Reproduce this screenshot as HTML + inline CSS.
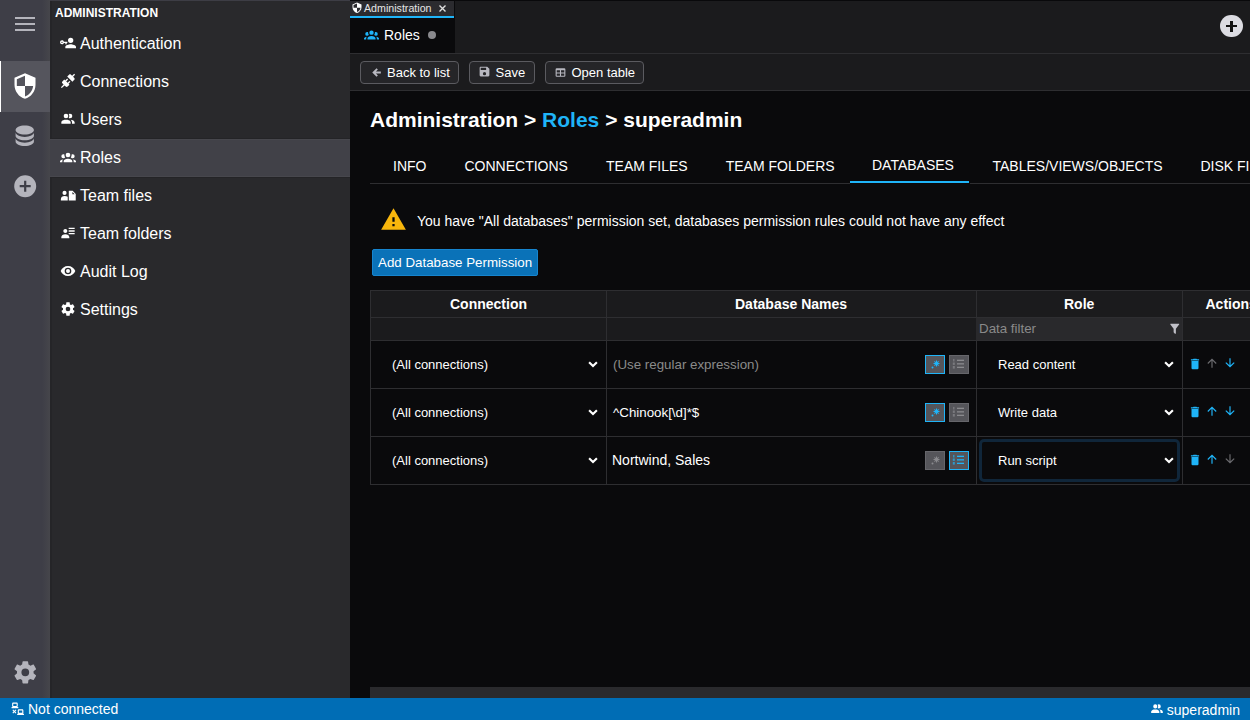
<!DOCTYPE html>
<html><head><meta charset="utf-8">
<style>
*{box-sizing:border-box;margin:0;padding:0}
html,body{width:1250px;height:720px;overflow:hidden;background:#0a0a0c;font-family:"Liberation Sans",sans-serif;color:#fff}
.abs{position:absolute}
svg{display:block}
.t{position:absolute;white-space:pre;line-height:1}
#iconbar{left:0;top:0;width:50px;height:698px;background:#3e3e47}
#sidebar{left:50px;top:0;width:300px;height:698px;background:#29292c}
.mi{position:absolute;left:0;width:300px;height:38px}
.mi svg{position:absolute;left:10px;top:9.5px}
.mi .t{left:30px;top:11px;font-size:16px;color:#fff}
#tabbar{left:350px;top:0;width:900px;height:53px;background:#1b1b1d}
#toolbar{left:350px;top:53px;width:900px;height:38px;background:#1b1b1d;border-top:1px solid #2e2e31;border-bottom:1px solid #2e2e31}
.btn{position:absolute;top:61px;height:23px;border:1px solid #5b5b60;border-radius:4px;background:#252528}
.btn .t{font-size:13px;color:#fff;top:4px}
.btn svg{position:absolute}
#statusbar{left:0;top:698px;width:1250px;height:22px;background:#006db5}
.tab{position:absolute;top:159px;font-size:14px;color:#fff;white-space:pre;line-height:1}
.hd{position:absolute;font-size:14px;font-weight:bold;color:#fff;top:297px;white-space:pre;line-height:1}
.bl{background:#2e2e31}
</style></head><body>

<!-- ICON BAR -->
<div id="iconbar" class="abs">
  <div class="abs" style="left:42px;top:0;width:8px;height:698px;background:linear-gradient(90deg,rgba(70,70,75,0),#46464b)"></div>
  <div class="abs" style="left:15px;top:17px;width:20px;height:2px;background:#b4b4bc"></div>
  <div class="abs" style="left:15px;top:23px;width:20px;height:2px;background:#b4b4bc"></div>
  <div class="abs" style="left:15px;top:29px;width:20px;height:2px;background:#b4b4bc"></div>
  <div class="abs" style="left:0;top:61px;width:50px;height:51px;background:#55555d"></div>
  <div class="abs" style="left:0;top:61px;width:1px;height:51px;background:#fff"></div>
  <svg class="abs" style="left:11.2px;top:72px" width="28" height="28" viewBox="0 0 24 24" preserveAspectRatio="none"><path fill="#fff" d="M12,12H19C18.47,16.11 15.72,19.78 12,20.92V12H5V6.3L12,3.19M12,1L3,5V11C3,16.55 6.84,21.73 12,23C17.16,21.73 21,16.55 21,11V5L12,1Z"/></svg>
  <svg class="abs" style="left:11.2px;top:122.2px" width="27.5" height="27.5" viewBox="0 0 24 24"><path fill="#b4b4bc" d="M12,3C7.58,3 4,4.79 4,7C4,9.21 7.58,11 12,11C16.42,11 20,9.21 20,7C20,4.79 16.42,3 12,3M4,9V12C4,14.21 7.58,16 12,16C16.42,16 20,14.21 20,12V9C20,11.21 16.42,13 12,13C7.58,13 4,11.21 4,9M4,14V17C4,19.21 7.58,21 12,21C16.42,21 20,19.21 20,17V14C20,16.21 16.42,18 12,18C7.58,18 4,16.21 4,14Z"/></svg>
  <svg class="abs" style="left:11.8px;top:172.6px" width="26.4" height="26.4" viewBox="0 0 24 24"><path fill="#b4b4bc" d="M17,13H13V17H11V13H7V11H11V7H13V11H17M12,2A10,10 0 0,0 2,12A10,10 0 0,0 12,22A10,10 0 0,0 22,12A10,10 0 0,0 12,2Z"/></svg>
  <svg class="abs" style="left:11.5px;top:658.5px" width="26.6" height="26.6" viewBox="0 0 24 24"><path fill="#b4b4bc" d="M12,15.5A3.5,3.5 0 0,1 8.5,12A3.5,3.5 0 0,1 12,8.5A3.5,3.5 0 0,1 15.5,12A3.5,3.5 0 0,1 12,15.5M19.43,12.97C19.47,12.65 19.5,12.33 19.5,12C19.5,11.67 19.47,11.34 19.43,11L21.54,9.37C21.73,9.22 21.78,8.95 21.66,8.73L19.66,5.27C19.54,5.05 19.27,4.96 19.05,5.05L16.56,6.05C16.04,5.66 15.5,5.32 14.87,5.07L14.5,2.42C14.46,2.18 14.25,2 14,2H10C9.75,2 9.54,2.18 9.5,2.42L9.13,5.07C8.5,5.32 7.960,5.66 7.44,6.05L4.95,5.05C4.73,4.96 4.46,5.05 4.34,5.27L2.34,8.73C2.21,8.95 2.27,9.22 2.46,9.37L4.57,11C4.53,11.34 4.5,11.67 4.5,12C4.5,12.33 4.53,12.65 4.57,12.97L2.46,14.63C2.27,14.78 2.21,15.05 2.34,15.27L4.34,18.73C4.46,18.95 4.73,19.03 4.95,18.95L7.44,17.94C7.96,18.34 8.5,18.68 9.13,18.93L9.5,21.58C9.54,21.82 9.75,22 10,22H14C14.25,22 14.46,21.82 14.5,21.58L14.87,18.93C15.5,18.67 16.04,18.34 16.56,17.94L19.05,18.95C19.27,19.03 19.54,18.950 19.66,18.73L21.66,15.27C21.78,15.05 21.730,14.78 21.54,14.63L19.43,12.97Z"/></svg>
</div>

<!-- SIDEBAR -->
<div id="sidebar" class="abs">
  <div class="abs" style="left:0;top:1px;width:2px;height:697px;background:#252528"></div>
  <div class="abs" style="left:0;top:0;width:300px;height:1px;background:#3d3d45"></div>
  <div class="t" style="left:5px;top:7px;font-size:12px;font-weight:bold">ADMINISTRATION</div>
  <!-- items -->
  <div class="mi" style="top:25px">
    <svg width="16" height="16" viewBox="0 0 24 24"><path fill="#fff" d="M11,10V12H10V14H8V12H5.83C5.42,13.17 4.31,14 3,14A3,3 0 0,1 0,11A3,3 0 0,1 3,8C4.31,8 5.42,8.83 5.830,10H11M3,10A1,1 0 0,0 2,11A1,1 0 0,0 3,12A1,1 0 0,0 4,11A1,1 0 0,0 3,10M16,14C18.67,14 24,15.34 24,18V20H8V18C8,15.34 13.33,14 16,14M16,12A4,4 0 0,1 12,8A4,4 0 0,1 16,4A4,4 0 0,1 20,8A4,4 0 0,1 16,12Z"/></svg>
    <div class="t">Authentication</div>
  </div>
  <div class="mi" style="top:63px">
    <svg width="16" height="16" viewBox="0 0 24 24"><path fill="#fff" d="M21.4 7.5C22.2 8.3 22.2 9.6 21.4 10.3L18.6 13.1L10.8 5.3L13.6 2.5C14.4 1.7 15.7 1.7 16.4 2.5L18.2 4.3L21.2 1.3L22.6 2.7L19.6 5.700L21.4 7.5M15.6 13.3L14.2 11.9L11.4 14.7L9.3 12.6L12.1 9.8L10.7 8.4L7.9 11.2L6.4 9.8L3.6 12.6C2.8 13.4 2.8 14.7 3.6 15.4L5.4 17.2L1.4 21.2L2.8 22.6L6.8 18.6L8.6 20.4C9.4 21.2 10.7 21.2 11.4 20.4L14.2 17.6L12.8 16.2L15.6 13.3Z"/></svg>
    <div class="t">Connections</div>
  </div>
  <div class="mi" style="top:101px">
    <svg width="16" height="16" viewBox="0 0 24 24"><path fill="#fff" d="M16 17V19H2V17S2 13 9 13 16 17 16 17M12.5 7.5A3.5 3.5 0 1 0 9 11A3.5 3.5 0 0 0 12.5 7.5M15.94 13A5.32 5.32 0 0 1 18 17V19H22V17S22 13.37 15.94 13M15 4A3.39 3.39 0 0 0 13.07 4.59A5 5 0 0 1 13.07 10.41A3.39 3.39 0 0 0 15 11A3.5 3.5 0 0 0 15 4Z"/></svg>
    <div class="t">Users</div>
  </div>
  <div class="abs" style="left:0;top:138px;width:300px;height:1px;background:#242427"></div><div class="abs" style="left:0;top:177px;width:300px;height:1px;background:#242427"></div>
  <div class="mi" style="top:139px;background:#414148;box-shadow:inset 0 1px 0 #47474d,inset 0 -1px 0 #47474d">
    <svg width="16" height="16" viewBox="0 0 24 24"><path fill="#fff" d="M12,5.5A3.5,3.5 0 0,1 15.5,9A3.5,3.5 0 0,1 12,12.5A3.5,3.5 0 0,1 8.5,9A3.5,3.5 0 0,1 12,5.5M5,8C5.56,8 6.08,8.15 6.53,8.42C6.38,9.85 6.8,11.27 7.66,12.38C7.16,13.34 6.16,14 5,14A3,3 0 0,1 2,11A3,3 0 0,1 5,8M19,8A3,3 0 0,1 22,11A3,3 0 0,1 19,14C17.84,14 16.84,13.34 16.34,12.38C17.2,11.27 17.62,9.85 17.47,8.42C17.92,8.15 18.44,8 19,8M5.5,18.25C5.5,16.18 8.41,14.5 12,14.5C15.59,14.5 18.5,16.18 18.5,18.25V20H5.5V18.25M0,20V18.5C0,17.11 1.89,15.94 4.45,15.6C3.86,16.28 3.5,17.22 3.5,18.25V20H0M24,20H20.5V18.25C20.5,17.22 20.14,16.28 19.55,15.6C22.11,15.94 24,17.11 24,18.5V20Z"/></svg>
    <div class="t">Roles</div>
  </div>
  <div class="mi" style="top:177px">
    <svg width="16" height="16" viewBox="0 0 24 24"><path fill="#fff" d="M6.8,5.8A3.1,3.1 0 0,1 9.9,8.9A3.1,3.1 0 0,1 6.8,12A3.1,3.1 0 0,1 3.7,8.9A3.1,3.1 0 0,1 6.8,5.8M1.3,20.3V18C1.3,15.6 3.8,13.6 6.8,13.6C8.6,13.6 10.3,14 11.6,14.8V20.3H1.3M13.2,5.8H19L23.6,10.4V20.3H13.2V5.8M18.6,7.4V10.8H22Z"/></svg>
    <div class="t">Team files</div>
  </div>
  <div class="mi" style="top:215px">
    <svg width="16" height="16" viewBox="0 0 24 24"><path fill="#fff" d="M11 9C11 10.66 9.66 12 8 12C6.34 12 5 10.66 5 9C5 7.34 6.34 6 8 6C9.66 6 11 7.34 11 9M14 20H2V18C2 15.79 4.69 14 8 14C11.31 14 14 15.79 14 18M22 12V14H13V12M22 8V10H13V8M22 4V6H13V4Z"/></svg>
    <div class="t">Team folders</div>
  </div>
  <div class="mi" style="top:253px">
    <svg width="16" height="16" viewBox="0 0 24 24"><path fill="#fff" d="M12,9A3,3 0 0,0 9,12A3,3 0 0,0 12,15A3,3 0 0,0 15,12A3,3 0 0,0 12,9M12,17A5,5 0 0,1 7,12A5,5 0 0,1 12,7A5,5 0 0,1 17,12A5,5 0 0,1 12,17M12,4.5C7,4.5 2.73,7.61 1,12C2.73,16.39 7,19.5 12,19.5C17,19.5 21.27,16.39 23,12C21.27,7.61 17,4.5 12,4.5Z"/></svg>
    <div class="t">Audit Log</div>
  </div>
  <div class="mi" style="top:291px">
    <svg width="16" height="16" viewBox="0 0 24 24"><path fill="#fff" d="M12,15.5A3.5,3.5 0 0,1 8.5,12A3.5,3.5 0 0,1 12,8.5A3.5,3.5 0 0,1 15.5,12A3.5,3.5 0 0,1 12,15.5M19.43,12.97C19.47,12.65 19.5,12.33 19.5,12C19.5,11.67 19.47,11.34 19.43,11L21.54,9.37C21.73,9.22 21.78,8.95 21.66,8.73L19.66,5.27C19.54,5.05 19.27,4.96 19.05,5.05L16.56,6.05C16.04,5.66 15.5,5.32 14.87,5.07L14.5,2.42C14.46,2.18 14.25,2 14,2H10C9.75,2 9.54,2.18 9.5,2.42L9.13,5.07C8.5,5.32 7.96,5.66 7.44,6.05L4.95,5.05C4.73,4.96 4.46,5.05 4.34,5.27L2.34,8.73C2.21,8.95 2.27,9.22 2.46,9.37L4.57,11C4.53,11.34 4.5,11.67 4.5,12C4.5,12.33 4.53,12.65 4.57,12.97L2.46,14.63C2.27,14.78 2.21,15.05 2.34,15.27L4.34,18.73C4.46,18.95 4.73,19.03 4.95,18.95L7.44,17.94C7.96,18.34 8.5,18.68 9.13,18.93L9.5,21.58C9.54,21.82 9.75,22 10,22H14C14.25,22 14.46,21.82 14.5,21.58L14.87,18.93C15.5,18.67 16.04,18.34 16.56,17.94L19.05,18.95C19.27,19.03 19.54,18.95 19.66,18.73L21.66,15.27C21.78,15.05 21.73,14.78 21.54,14.63L19.43,12.97Z"/></svg>
    <div class="t">Settings</div>
  </div>
</div>


<!-- TAB BAR -->
<div id="tabbar" class="abs">
  <div class="abs" style="left:0;top:0;width:900px;height:1px;background:#09090b"></div><div class="abs" style="left:0;top:1px;width:104px;height:15px;background:#2b2b2f"></div><div class="abs" style="left:104px;top:0;width:1px;height:53px;background:#0a0a0c"></div>
  <div class="abs" style="left:0;top:16px;width:104px;height:2px;background:#1fb4f8"></div>
  <div class="abs" style="left:0;top:18px;width:105px;height:35px;background:#0a0a0c"></div>
  <svg class="abs" style="left:0.5px;top:1.9px" width="12" height="11.5" viewBox="0 0 24 24" preserveAspectRatio="none"><path fill="#fff" d="M12,12H19C18.47,16.11 15.72,19.78 12,20.92V12H5V6.3L12,3.19M12,1L3,5V11C3,16.55 6.84,21.73 12,23C17.16,21.730 21,16.55 21,11V5L12,1Z"/></svg>
  <div class="t" style="left:14px;top:3px;font-size:10.67px;color:#e6e6e6">Administration</div>
  <svg class="abs" style="left:89px;top:5px" width="7" height="7" viewBox="0 0 7 7"><path fill="none" stroke="#e0e0e0" stroke-width="1.4" d="M0.5,0.5L6.5,6.5M6.5,0.5L0.5,6.5"/></svg>
  <svg class="abs" style="left:14px;top:27px" width="15" height="15" viewBox="0 0 24 24"><path fill="#1fb4f8" d="M12,5.5A3.5,3.5 0 0,1 15.5,9A3.5,3.5 0 0,1 12,12.5A3.5,3.5 0 0,1 8.5,9A3.5,3.5 0 0,1 12,5.5M5,8C5.56,8 6.08,8.15 6.53,8.42C6.38,9.85 6.8,11.27 7.66,12.38C7.16,13.34 6.16,14 5,14A3,3 0 0,1 2,11A3,3 0 0,1 5,8M19,8A3,3 0 0,1 22,11A3,3 0 0,1 19,14C17.84,14 16.84,13.34 16.34,12.38C17.2,11.27 17.62,9.85 17.47,8.42C17.92,8.15 18.44,8 19,8M5.5,18.25C5.5,16.18 8.41,14.5 12,14.5C15.59,14.5 18.5,16.18 18.5,18.25V20H5.5V18.25M0,20V18.5C0,17.11 1.89,15.94 4.45,15.6C3.86,16.28 3.5,17.22 3.5,18.25V20H0M24,20H20.5V18.25C20.5,17.22 20.14,16.28 19.55,15.6C22.11,15.940 24,17.11 24,18.5V20Z"/></svg>
  <div class="t" style="left:34px;top:28px;font-size:14px;color:#fff">Roles</div>
  <div class="abs" style="left:78px;top:31px;width:8px;height:8px;border-radius:50%;background:#8a8a8e"></div>
  <div class="abs" style="left:870px;top:14.8px;width:22.6px;height:22.6px;border-radius:50%;background:#dcdce2"></div>
  <div class="abs" style="left:876px;top:25px;width:11.2px;height:2.1px;background:#111"></div>
  <div class="abs" style="left:880.3px;top:20.5px;width:2.3px;height:11px;background:#111"></div>
</div>

<!-- TOOLBAR -->
<div id="toolbar" class="abs"></div>
<div class="btn" style="left:360px;width:99px">
  <svg style="left:8.5px;top:3.6px" width="13" height="13" viewBox="0 0 24 24"><path fill="#b8b8c0" d="M20,10V14H11L14.5,17.5L12.08,19.92L4.16,12L12.08,4.08L14.5,6.5L11,10H20Z"/></svg>
  <div class="t" style="left:26px">Back to list</div>
</div>
<div class="btn" style="left:469px;width:66px">
  <svg style="left:8px;top:3.4px" width="13" height="13" viewBox="0 0 24 24"><path fill="#b8b8c0" d="M15,9H5V5H15M12,19A3,3 0 0,1 9,16A3,3 0 0,1 12,13A3,3 0 0,1 15,16A3,3 0 0,1 12,19M17,3H5C3.89,3 3,3.9 3,5V19A2,2 0 0,0 5,21H19A2,2 0 0,0 21,19V7L17,3Z"/></svg>
  <div class="t" style="left:25.5px">Save</div>
</div>
<div class="btn" style="left:545px;width:99px">
  <svg style="left:7.5px;top:3.5px" width="13" height="13" viewBox="0 0 24 24"><path fill="#b8b8c0" d="M5,4H19A2,2 0 0,1 21,6V18A2,2 0 0,1 19,20H5A2,2 0 0,1 3,18V6A2,2 0 0,1 5,4M5,8V12H11V8H5M13,8V12H19V8H13M5,14V18H11V14H5M13,14V18H19V14H13Z"/></svg>
  <div class="t" style="left:25.5px">Open table</div>
</div>

<!-- TITLE -->
<div class="t" style="left:370px;top:109px;font-size:21px;font-weight:bold;color:#fff">Administration &gt; <span style="color:#1fb4f8">Roles</span> &gt; superadmin</div>

<!-- TABS -->
<div class="abs bl" style="left:370px;top:183px;width:880px;height:1px"></div>
<div class="tab" style="left:393px">INFO</div>
<div class="tab" style="left:464.5px">CONNECTIONS</div>
<div class="tab" style="left:606px">TEAM FILES</div>
<div class="tab" style="left:725.7px">TEAM FOLDERS</div>
<div class="tab" style="left:872px;top:158px">DATABASES</div>
<div class="abs" style="left:850px;top:181px;width:119px;height:2px;background:#1fb4f8"></div><div class="abs" style="left:850px;top:183px;width:120px;height:1px;background:#09090b"></div>
<div class="tab" style="left:992.5px">TABLES/VIEWS/OBJECTS</div>
<div class="tab" style="left:1200.5px">DISK FILES</div>

<!-- WARNING -->
<svg class="abs" style="left:379.5px;top:206px" width="27" height="27" viewBox="0 0 24 24"><path fill="#f8b60c" d="M13,14H11V10H13M13,18H11V16H13M1,21H23L12,2L1,21Z"/></svg>
<div class="t" style="left:417px;top:214px;font-size:14px;color:#fff">You have "All databases" permission set, databases permission rules could not have any effect</div>

<!-- ADD BUTTON -->
<div class="abs" style="left:372px;top:249px;width:166px;height:27px;background:#0a72b8;border-radius:2px;border:1px solid #1685cf"></div>
<div class="t" style="left:378px;top:256px;font-size:13.33px;color:#fff">Add Database Permission</div>

<!-- TABLE -->
<div class="abs" style="left:370px;top:290px;width:880px;height:51px;background:#1b1b1d"></div>
<div class="abs bl" style="left:370px;top:290px;width:880px;height:1px"></div>
<div class="abs bl" style="left:370px;top:317px;width:880px;height:1px"></div>
<div class="abs bl" style="left:370px;top:340px;width:880px;height:1px"></div>
<div class="abs bl" style="left:370px;top:388px;width:880px;height:1px"></div>
<div class="abs bl" style="left:370px;top:436px;width:880px;height:1px"></div>
<div class="abs bl" style="left:370px;top:484px;width:880px;height:1px"></div>
<div class="abs bl" style="left:370px;top:290px;width:1px;height:195px"></div>
<div class="abs bl" style="left:606px;top:290px;width:1px;height:195px"></div>
<div class="abs bl" style="left:976px;top:290px;width:1px;height:195px"></div>
<div class="abs bl" style="left:1182px;top:290px;width:1px;height:195px"></div>
<div class="hd" style="left:450px">Connection</div>
<div class="hd" style="left:735px">Database Names</div>
<div class="hd" style="left:1064px">Role</div>
<div class="hd" style="left:1205.5px">Actions</div>
<div class="abs" style="left:976px;top:318px;width:206px;height:22px;background:#29292c"></div>
<div class="t" style="left:979px;top:322px;font-size:13.33px;color:#8a8a8a">Data filter</div>
<svg class="abs" style="left:1167.5px;top:321.5px" width="13.5" height="13.5" viewBox="0 0 24 24"><path fill="#c0c0c8" d="M14,12V19.88C14.04,20.18 13.94,20.5 13.71,20.71C13.32,21.1 12.69,21.1 12.3,20.71L10.29,18.7C10.06,18.47 9.96,18.16 10,17.87V12H9.97L4.21,4.62C3.87,4.19 3.95,3.56 4.38,3.22C4.57,3.08 4.78,3 5,3H19C19.22,3 19.43,3.08 19.62,3.22C20.05,3.56 20.13,4.19 19.79,4.62L14.03,12H14Z"/></svg>
<div class="t" style="left:392px;top:358px;font-size:13px;color:#fff">(All connections)</div>
<svg class="abs" style="left:588px;top:360.5px" width="10" height="7" viewBox="0 0 10 7"><path fill="none" stroke="#fff" stroke-width="2.1" d="M1.1,1.2L5,5.1L8.9,1.2"/></svg>
<div class="t" style="left:613px;top:357.5px;font-size:13.33px;color:#8a8a8a">(Use regular expression)</div>
<div class="abs" style="left:925px;top:355px;width:20px;height:19px;background:#55555a;border:1px solid #1fb4f8;"></div><svg class="abs" style="left:929px;top:358px" width="12" height="12" viewBox="0 0 24 24"><path fill="#1fb4f8" d="M16,16.92C15.67,16.97 15.34,17 15,17C14.66,17 14.33,16.97 14,16.92V13.41L11.5,15.89C11,15.5 10.5,15 10.11,14.5L12.59,12H9.08C9.03,11.67 9,11.34 9,11C9,10.66 9.03,10.33 9.08,10H12.59L10.11,7.5C10.3,7.25 10.5,7 10.76,6.76V6.76C11,6.5 11.25,6.3 11.5,6.11L14,8.59V5.08C14.33,5.03 14.66,5 15,5C15.34,5 15.67,5.03 16,5.08V8.59L18.5,6.11C19,6.5 19.5,7 19.89,7.5L17.41,10H20.92C20.97,10.33 21,10.66 21,11C21,11.34 20.97,11.67 20.92,12H17.41L19.89,14.5C19.7,14.75 19.5,15 19.24,15.24V15.24C19,15.5 18.75,15.7 18.5,15.89L16,13.41V16.92H16V16.92M5,19A2,2 0 0,1 7,17A2,2 0 0,1 9,19A2,2 0 0,1 7,21A2,2 0 0,1 5,19H5Z"/></svg>
<div class="abs" style="left:949px;top:355px;width:20px;height:19px;background:#55555a;border:1px solid #66666b;"></div><svg class="abs" style="left:952px;top:358.2px" width="13" height="12" viewBox="0 0 13 12"><g fill="#8a8a8e"><rect x="5" y="1.7" width="7" height="1.3"/><rect x="5" y="5.2" width="7" height="1.3"/><rect x="5" y="8.7" width="7" height="1.3"/><rect x="1.2" y="0.9" width="1.2" height="2.6" opacity=".8"/><rect x="0.8" y="4.5" width="2" height="2.4" opacity=".7"/><rect x="0.8" y="8" width="2" height="2.6" opacity=".7"/></g></svg>
<div class="t" style="left:998px;top:358px;font-size:13px;color:#fff">Read content</div>
<svg class="abs" style="left:1164px;top:360.5px" width="10" height="7" viewBox="0 0 10 7"><path fill="none" stroke="#fff" stroke-width="2.1" d="M1.1,1.2L5,5.1L8.9,1.2"/></svg>
<svg class="abs" style="left:1188.3px;top:356.5px" width="14" height="14" viewBox="0 0 24 24"><path fill="#1fb4f8" d="M19,4H15.5L14.5,3H9.5L8.5,4H5V6H19M6,19A2,2 0 0,0 8,21H16A2,2 0 0,0 18,19V7H6V19Z"/></svg>
<svg class="abs" style="left:1205.3px;top:355.5px" width="14" height="14" viewBox="0 0 24 24"><path fill="#6a6a6e" d="M13,20H11V8L5.5,13.5L4.08,12.08L12,4.16L19.92,12.08L18.5,13.5L13,8V20Z"/></svg>
<svg class="abs" style="left:1223.3px;top:355.5px" width="14" height="14" viewBox="0 0 24 24"><path fill="#1fb4f8" d="M11,4H13V16L18.5,10.5L19.920,11.92L12,19.84L4.08,11.92L5.5,10.5L11,16V4Z"/></svg>
<div class="t" style="left:392px;top:406px;font-size:13px;color:#fff">(All connections)</div>
<svg class="abs" style="left:588px;top:408.5px" width="10" height="7" viewBox="0 0 10 7"><path fill="none" stroke="#fff" stroke-width="2.1" d="M1.1,1.2L5,5.1L8.9,1.2"/></svg>
<div class="t" style="left:613px;top:405.5px;font-size:13.33px;color:#fff">^Chinook[\d]*$</div>
<div class="abs" style="left:925px;top:403px;width:20px;height:19px;background:#55555a;border:1px solid #1fb4f8;"></div><svg class="abs" style="left:929px;top:406px" width="12" height="12" viewBox="0 0 24 24"><path fill="#1fb4f8" d="M16,16.92C15.67,16.97 15.34,17 15,17C14.66,17 14.33,16.97 14,16.92V13.41L11.5,15.89C11,15.5 10.5,15 10.11,14.5L12.59,12H9.08C9.03,11.67 9,11.34 9,11C9,10.66 9.03,10.33 9.08,10H12.59L10.11,7.5C10.3,7.25 10.5,7 10.76,6.76V6.76C11,6.5 11.25,6.3 11.5,6.11L14,8.59V5.08C14.33,5.03 14.66,5 15,5C15.34,5 15.67,5.03 16,5.08V8.59L18.5,6.11C19,6.5 19.5,7 19.89,7.5L17.41,10H20.92C20.97,10.33 21,10.66 21,11C21,11.34 20.97,11.67 20.92,12H17.41L19.89,14.5C19.7,14.75 19.5,15 19.24,15.24V15.24C19,15.5 18.75,15.7 18.5,15.89L16,13.41V16.92H16V16.92M5,19A2,2 0 0,1 7,17A2,2 0 0,1 9,19A2,2 0 0,1 7,21A2,2 0 0,1 5,19H5Z"/></svg>
<div class="abs" style="left:949px;top:403px;width:20px;height:19px;background:#55555a;border:1px solid #66666b;"></div><svg class="abs" style="left:952px;top:406.2px" width="13" height="12" viewBox="0 0 13 12"><g fill="#8a8a8e"><rect x="5" y="1.7" width="7" height="1.3"/><rect x="5" y="5.2" width="7" height="1.3"/><rect x="5" y="8.7" width="7" height="1.3"/><rect x="1.2" y="0.9" width="1.2" height="2.6" opacity=".8"/><rect x="0.8" y="4.5" width="2" height="2.4" opacity=".7"/><rect x="0.8" y="8" width="2" height="2.6" opacity=".7"/></g></svg>
<div class="t" style="left:998px;top:406px;font-size:13px;color:#fff">Write data</div>
<svg class="abs" style="left:1164px;top:408.5px" width="10" height="7" viewBox="0 0 10 7"><path fill="none" stroke="#fff" stroke-width="2.1" d="M1.1,1.2L5,5.1L8.9,1.2"/></svg>
<svg class="abs" style="left:1188.3px;top:404.5px" width="14" height="14" viewBox="0 0 24 24"><path fill="#1fb4f8" d="M19,4H15.5L14.5,3H9.5L8.5,4H5V6H19M6,19A2,2 0 0,0 8,21H16A2,2 0 0,0 18,19V7H6V19Z"/></svg>
<svg class="abs" style="left:1205.3px;top:403.5px" width="14" height="14" viewBox="0 0 24 24"><path fill="#1fb4f8" d="M13,20H11V8L5.5,13.5L4.08,12.08L12,4.16L19.92,12.08L18.5,13.5L13,8V20Z"/></svg>
<svg class="abs" style="left:1223.3px;top:403.5px" width="14" height="14" viewBox="0 0 24 24"><path fill="#1fb4f8" d="M11,4H13V16L18.5,10.5L19.920,11.92L12,19.84L4.08,11.92L5.5,10.5L11,16V4Z"/></svg>
<div class="t" style="left:392px;top:454px;font-size:13px;color:#fff">(All connections)</div>
<svg class="abs" style="left:588px;top:456.5px" width="10" height="7" viewBox="0 0 10 7"><path fill="none" stroke="#fff" stroke-width="2.1" d="M1.1,1.2L5,5.1L8.9,1.2"/></svg>
<div class="t" style="left:612px;top:453px;font-size:14px;color:#fff">Nortwind, Sales</div>
<div class="abs" style="left:925px;top:451px;width:20px;height:19px;background:#55555a;border:1px solid #66666b;"></div><svg class="abs" style="left:929px;top:454px" width="12" height="12" viewBox="0 0 24 24"><path fill="#8a8a8e" d="M16,16.92C15.67,16.97 15.34,17 15,17C14.66,17 14.33,16.97 14,16.92V13.41L11.5,15.89C11,15.5 10.5,15 10.11,14.5L12.59,12H9.08C9.03,11.67 9,11.34 9,11C9,10.66 9.03,10.33 9.08,10H12.59L10.11,7.5C10.3,7.25 10.5,7 10.76,6.76V6.76C11,6.5 11.25,6.3 11.5,6.11L14,8.59V5.08C14.33,5.03 14.66,5 15,5C15.34,5 15.67,5.03 16,5.08V8.59L18.5,6.11C19,6.5 19.5,7 19.89,7.5L17.41,10H20.92C20.97,10.33 21,10.66 21,11C21,11.34 20.97,11.67 20.92,12H17.41L19.89,14.5C19.7,14.75 19.5,15 19.24,15.24V15.24C19,15.5 18.75,15.7 18.5,15.89L16,13.41V16.92H16V16.92M5,19A2,2 0 0,1 7,17A2,2 0 0,1 9,19A2,2 0 0,1 7,21A2,2 0 0,1 5,19H5Z"/></svg>
<div class="abs" style="left:949px;top:451px;width:20px;height:19px;background:#55555a;border:1px solid #1fb4f8;"></div><svg class="abs" style="left:952px;top:454.2px" width="13" height="12" viewBox="0 0 13 12"><g fill="#1fb4f8"><rect x="5" y="1.7" width="7" height="1.3"/><rect x="5" y="5.2" width="7" height="1.3"/><rect x="5" y="8.7" width="7" height="1.3"/><rect x="1.2" y="0.9" width="1.2" height="2.6" opacity=".8"/><rect x="0.8" y="4.5" width="2" height="2.4" opacity=".7"/><rect x="0.8" y="8" width="2" height="2.6" opacity=".7"/></g></svg>
<div class="abs" style="left:979px;top:439px;width:201px;height:43px;border:3px solid #10263a;border-radius:5px"></div>
<div class="t" style="left:998px;top:454px;font-size:13px;color:#fff">Run script</div>
<svg class="abs" style="left:1164px;top:456.5px" width="10" height="7" viewBox="0 0 10 7"><path fill="none" stroke="#fff" stroke-width="2.1" d="M1.1,1.2L5,5.1L8.9,1.2"/></svg>
<svg class="abs" style="left:1188.3px;top:452.5px" width="14" height="14" viewBox="0 0 24 24"><path fill="#1fb4f8" d="M19,4H15.5L14.5,3H9.5L8.5,4H5V6H19M6,19A2,2 0 0,0 8,21H16A2,2 0 0,0 18,19V7H6V19Z"/></svg>
<svg class="abs" style="left:1205.3px;top:451.5px" width="14" height="14" viewBox="0 0 24 24"><path fill="#1fb4f8" d="M13,20H11V8L5.5,13.5L4.08,12.08L12,4.16L19.92,12.08L18.5,13.5L13,8V20Z"/></svg>
<svg class="abs" style="left:1223.3px;top:451.5px" width="14" height="14" viewBox="0 0 24 24"><path fill="#6a6a6e" d="M11,4H13V16L18.5,10.5L19.920,11.92L12,19.84L4.08,11.92L5.5,10.5L11,16V4Z"/></svg>

<!-- SCROLLBAR -->
<div class="abs" style="left:370px;top:687px;width:880px;height:11px;background:#2a2a2d"></div>

<!-- STATUS BAR -->
<div id="statusbar" class="abs">
  <svg class="abs" style="left:10.8px;top:3.8px" width="13.5" height="13.5" viewBox="0 0 24 24"><path fill="#fff" d="M4,1C2.89,1 2,1.89 2,3V7C2,8.11 2.89,9 4,9H1V11H13V9H10C11.11,9 12,8.11 12,7V3C12,1.89 11.11,1 10,1H4M4,3H10V7H4V3M14,13C12.89,13 12,13.89 12,15V19C12,20.11 12.89,21 14,21H11V23H23V21H20C21.11,21 22,20.11 22,19V15C22,13.89 21.11,13 20,13H14M3.88,13.46L2.46,14.88L4.59,17L2.46,19.12L3.88,20.54L6,18.41L8.12,20.54L9.54,19.12L7.41,17L9.54,14.88L8.12,13.46L6,15.59L3.88,13.46M14,15H20V19H14V15Z"/></svg>
  <div class="t" style="left:28px;top:4px;font-size:14px;color:#fff">Not connected</div>
  <svg class="abs" style="left:1149.8px;top:3.5px" width="14" height="14" viewBox="0 0 24 24"><path fill="#fff" d="M16 17V19H2V17S2 13 9 13 16 17 16 17M12.5 7.5A3.5 3.5 0 1 0 9 11A3.5 3.5 0 0 0 12.5 7.5M15.94 13A5.32 5.32 0 0 1 18 17V19H22V17S22 13.37 15.94 13M15 4A3.39 3.39 0 0 0 13.07 4.59A5 5 0 0 1 13.07 10.41A3.39 3.39 0 0 0 15 11A3.5 3.5 0 0 0 15 4Z"/></svg>
  <div class="t" style="left:1166.8px;top:5px;font-size:14px;color:#fff">superadmin</div>
</div>
</body></html>
